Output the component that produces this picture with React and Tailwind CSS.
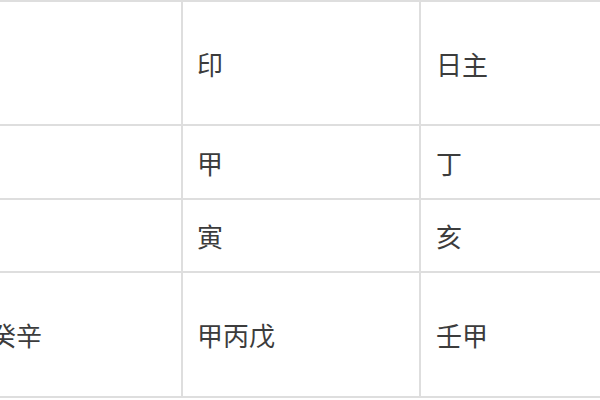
import React from 'react';

const rows = [
    { h: 'h-[124px]', cells: ['', '印', '日主'] },
    { h: 'h-[74px]', cells: ['', '甲', '丁'] },
    { h: 'h-[73px]', cells: ['', '寅', '亥'] },
    { h: 'h-[125px]', cells: ['癸辛', '甲丙戊', '壬甲'] },
];

export default function App() {
    return (
        <div className="w-[600px] h-[400px] overflow-hidden bg-white" style={{ fontFamily: '"Noto Sans CJK SC", "Noto Sans", sans-serif' }}>
            <div className="-ml-[25px] w-[700px] border-t-2 border-[#dedede] text-[26px] text-[#3c3c3c]">
                {rows.map((row, i) => (
                    <div key={i} className={`flex border-b-2 border-[#dedede] ${row.h}`}>
                        <div className="w-[208px] shrink-0 border-r-2 border-[#dedede] flex items-center pl-[15px]">{row.cells[0]}</div>
                        <div className="w-[238px] shrink-0 border-r-2 border-[#dedede] flex items-center pl-[14px]">{row.cells[1]}</div>
                        <div className="flex-1 flex items-center pl-[15px]">{row.cells[2]}</div>
                    </div>
                ))}
            </div>
        </div>
    );
}
